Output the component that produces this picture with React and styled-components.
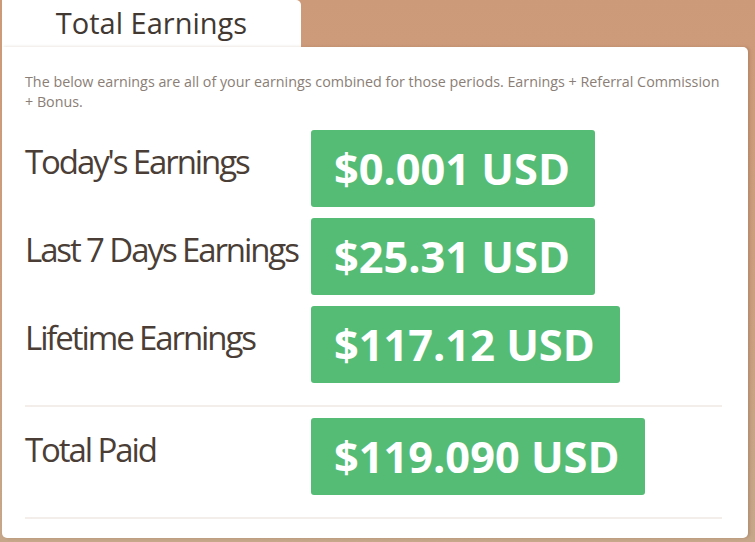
import React from 'react'
import styled, { createGlobalStyle } from 'styled-components'

const GlobalStyle = createGlobalStyle`
  html, body {
    margin: 0;
    padding: 0;
  }
  body {
    width: 755px;
    height: 542px;
    overflow: hidden;
    font-family: 'Open Sans', 'Liberation Sans', sans-serif;
    background: linear-gradient(180deg, #cd9a79 0%, #cc9f80 55%, #c6a78a 100%);
  }
`

const Page = styled.div`
  padding: 0 7px 0 2px;
`

const Tab = styled.div`
  width: 299px;
  height: 47px;
  background: #fff;
  border-radius: 0 5px 0 0;
  display: flex;
  align-items: center;
  justify-content: center;
`

const Title = styled.h1`
  margin: 0 0 2px;
  font-size: 29px;
  font-weight: 400;
  color: #413832;
  line-height: 1;
`

const Card = styled.div`
  background: #fff;
  border-radius: 0 5px 5px 5px;
  padding: 25px 26px 19px 23px;
  box-shadow: 2px 0 3px rgba(120, 80, 50, 0.25);
`

const Intro = styled.p`
  margin: 0 0 18px;
  font-size: 14.3px;
  line-height: 20px;
  color: #8a7e76;
`

const Rows = styled.div`
  display: grid;
  grid-template-columns: 286px auto;
  row-gap: 11px;
  justify-items: start;
`

const Label = styled.div`
  padding-top: 12px;
  font-size: 33px;
  line-height: 40px;
  letter-spacing: -2.1px;
  color: #4a3e36;
`

const Amount = styled.div`
  background: #55bc76;
  border-radius: 3px;
  height: 77px;
  padding: 0 25px 0 23px;
  display: flex;
  align-items: center;
  color: #fff;
  font-size: 43.3px;
  font-weight: 700;
  white-space: nowrap;
`

const Divider = styled.hr`
  grid-column: 1 / -1;
  justify-self: stretch;
  margin: 11px 0 0;
  border: 0;
  height: 2px;
  background: #f3eeea;
`

const earnings = [
  { label: "Today's Earnings", amount: '$0.001 USD' },
  { label: 'Last 7 Days Earnings', amount: '$25.31 USD' },
  { label: 'Lifetime Earnings', amount: '$117.12 USD' },
]

const App = () => (
  <>
    <GlobalStyle />
    <Page>
      <Tab>
        <Title>Total Earnings</Title>
      </Tab>
      <Card>
        <Intro>
          The below earnings are all of your earnings combined for those periods. Earnings + Referral Commission + Bonus.
        </Intro>
        <Rows>
          {earnings.map(e => (
            <React.Fragment key={e.label}>
              <Label>{e.label}</Label>
              <Amount>{e.amount}</Amount>
            </React.Fragment>
          ))}
          <Divider />
          <Label>Total Paid</Label>
          <Amount>$119.090 USD</Amount>
          <Divider />
        </Rows>
      </Card>
    </Page>
  </>
)

export default App
